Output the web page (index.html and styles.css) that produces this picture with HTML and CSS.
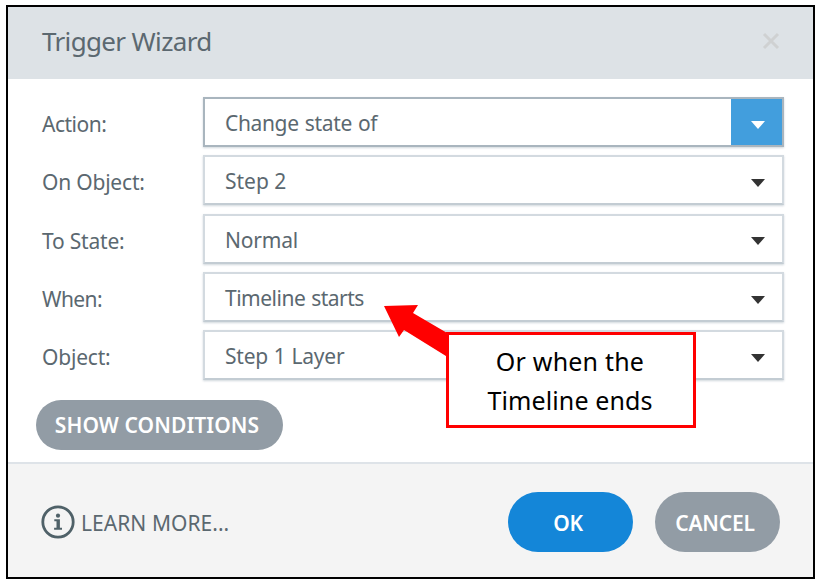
FILE: index.html
```html
<!DOCTYPE html>
<html lang="en">
<head>
    <meta charset="UTF-8">
    <meta name="viewport" content="width=device-width, initial-scale=1.0">
    <title>Trigger Wizard</title>
    <link rel="stylesheet" href="styles.css">
</head>
<body>

    <div class="wizard">
        <div class="header">
            <span class="title">Trigger Wizard</span>
            <svg class="close" width="18" height="18" viewBox="0 0 18 18">
                <path d="M2 2 L16 16 M16 2 L2 16" stroke="#cfd1d2" stroke-width="3" fill="none"/>
            </svg>
        </div>

        <div class="main">
            <div class="row">
                <span class="label action">Action:</span>
                <div class="select active">
                    <span class="value change">Change state of</span>
                    <span class="arrow"><svg width="14" height="8" viewBox="0 0 14 8"><path d="M0 0 H14 L7 8 Z"/></svg></span>
                </div>
            </div>
            <div class="row">
                <span class="label">On Object:</span>
                <div class="select">
                    <span class="value">Step 2</span>
                    <span class="arrow"><svg width="14" height="8" viewBox="0 0 14 8"><path d="M0 0 H14 L7 8 Z"/></svg></span>
                </div>
            </div>
            <div class="row">
                <span class="label">To State:</span>
                <div class="select">
                    <span class="value normal">Normal</span>
                    <span class="arrow"><svg width="14" height="8" viewBox="0 0 14 8"><path d="M0 0 H14 L7 8 Z"/></svg></span>
                </div>
            </div>
            <div class="row">
                <span class="label when">When:</span>
                <div class="select">
                    <span class="value timeline">Timeline starts</span>
                    <span class="arrow"><svg width="14" height="8" viewBox="0 0 14 8"><path d="M0 0 H14 L7 8 Z"/></svg></span>
                </div>
            </div>
            <div class="row">
                <span class="label">Object:</span>
                <div class="select">
                    <span class="value layer">Step 1 Layer</span>
                    <span class="arrow"><svg width="14" height="8" viewBox="0 0 14 8"><path d="M0 0 H14 L7 8 Z"/></svg></span>
                </div>
            </div>
            <button class="conditions">SHOW CONDITIONS</button>
        </div>

        <div class="footer">
            <a class="learn">
                <svg width="34" height="34" viewBox="0 0 34 34">
                    <circle cx="17" cy="17" r="15.2" fill="none" stroke="#4f6168" stroke-width="2.8"/>
                    <circle cx="17" cy="10.7" r="2.1" fill="#4f6168"/>
                    <path d="M13.3 14.3 H18.9 V22.8 H21 V24.8 H13.1 V22.8 H15.5 V16.3 H13.3 Z" fill="#4f6168"/>
                </svg>
                <span class="learn-text">LEARN MORE...</span>
            </a>
            <button class="ok">OK</button>
            <button class="cancel">CANCEL</button>
        </div>
    </div>

    <!-- note on top of the dialog -->
    <svg class="pointer" width="70" height="56" viewBox="0 0 70 56">
        <path d="M0 1 L34 0 L29 8 L70 32 V56 L20 25 L15 32 Z" fill="#ff0000"/>
    </svg>
    <div class="note">
        <div class="line1">Or when the</div>
        <div class="line2">Timeline ends</div>
    </div>

</body>
</html>
```

FILE: styles.css
```css
body {
    margin: 0;
    padding: 5px 0 0 6px;
    background-color: #fff;
    font-family: 'Noto Sans', sans-serif;
    color: #5b6870;
}

.wizard {
    box-sizing: border-box;
    width: 809px;
    height: 574px;
    border: 2px solid #000;
    display: flex;
    flex-direction: column;
}

.header {
    height: 72px;
    box-sizing: border-box;
    padding: 0 33px 5px 34px;
    background-color: #dde2e6;
    display: flex;
    align-items: center;
    justify-content: space-between;
}

.title {
    font-size: 26px;
    letter-spacing: -0.65px;
}

.main {
    height: 383px;
    box-sizing: border-box;
    padding: 18px 29px 0 28px;
}

.row {
    display: flex;
    height: 50px;
    margin-bottom: 8.35px;
}

.label {
    width: 167px;
    padding-left: 6px;
    box-sizing: border-box;
    font-size: 21px;
    line-height: 54px;
    letter-spacing: -0.2px;
}

.action {
    letter-spacing: -0.5px;
}

.when {
    letter-spacing: -0.6px;
}

.select {
    flex: 1;
    box-sizing: border-box;
    border: 2px solid #d3dae0;
    border-bottom-color: #c3ccd3;
    box-shadow: 0 1px 2px rgba(120, 140, 155, 0.35);
    display: flex;
    justify-content: space-between;
}

.select.active {
    border-color: #a9b5be;
}

.value {
    padding-left: 20px;
    font-size: 21px;
    line-height: 48px;
}

.change {
    letter-spacing: -0.35px;
    word-spacing: 1px;
}

.normal {
    letter-spacing: -0.2px;
}

.timeline {
    letter-spacing: -0.5px;
    word-spacing: 1px;
}

.layer {
    letter-spacing: -0.2px;
    word-spacing: 0.5px;
}

.arrow {
    width: 51px;
    display: flex;
    align-items: center;
    justify-content: center;
    padding: 5px 0 0 3px;
    box-sizing: border-box;
    fill: #333;
}

.active .arrow {
    background-color: #429edd;
    fill: #fff;
}

button {
    border: none;
    border-radius: 30px;
    padding: 0 5px 0 0;
    color: #fff;
    background-color: #929ca5;
    font-family: 'Noto Sans', sans-serif;
    font-size: 21px;
    font-weight: 600;
}

.conditions {
    display: block;
    width: 247px;
    height: 50px;
    margin-top: 20px;
    letter-spacing: 0.1px;
}

.footer {
    flex: 1;
    border-top: 2px solid #dee3e8;
    background-color: #f4f4f4;
    display: flex;
    align-items: center;
    padding: 2px 33px 0 33px;
}

.learn {
    flex: 1;
    display: flex;
    align-items: center;
}

.learn-text {
    margin-left: 6px;
    padding-top: 2px;
    font-size: 21px;
    letter-spacing: 0.05px;
}

.ok, .cancel {
    width: 125px;
    height: 60px;
    padding-top: 2px;
    letter-spacing: -0.2px;
}

.ok {
    background-color: #1486d8;
    margin-right: 22px;
}

.pointer {
    position: absolute;
    left: 384px;
    top: 305px;
}

.note {
    position: absolute;
    left: 446px;
    top: 332px;
    width: 250px;
    height: 96px;
    box-sizing: border-box;
    border: 3px solid #ff0000;
    background-color: #fff;
    color: #000;
    text-align: center;
    font-size: 25px;
    line-height: 39px;
    padding: 7px 2px 0 0;
}

.line1 {
    letter-spacing: 0.2px;
}

.line2 {
    letter-spacing: 0.1px;
}
```
